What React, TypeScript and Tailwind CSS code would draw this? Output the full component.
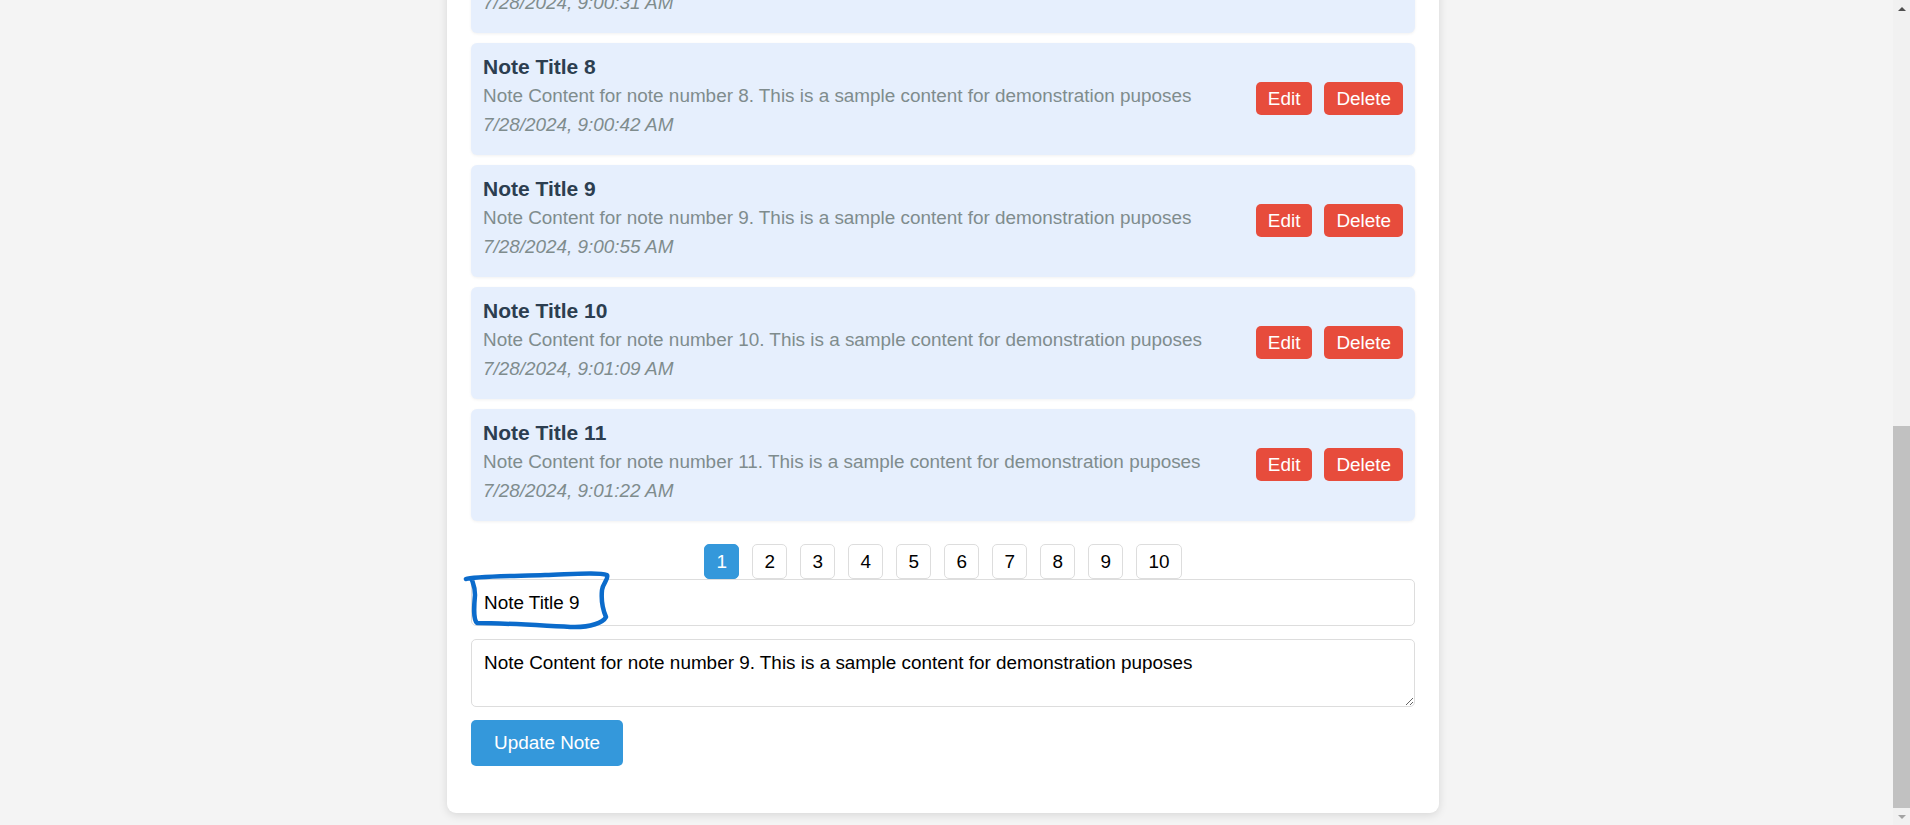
import React, { useState } from 'react';

type Note = {
  id: number;
  title: string;
  content: string;
  createdAt: string;
};

const times = [
  '8:59:05', '8:59:18', '8:59:34', '8:59:47', '9:00:02', '9:00:17',
  '9:00:31', '9:00:42', '9:00:55', '9:01:09', '9:01:22'
];

const initialNotes: Note[] = times.map((t, i) => ({
  id: i + 1,
  title: `Note Title ${i + 1}`,
  content: `Note Content for note number ${i + 1}. This is a sample content for demonstration puposes`,
  createdAt: `7/28/2024, ${t} AM`
}));

export default function App() {
  const [notes] = useState<Note[]>(initialNotes);
  const [page, setPage] = useState(1);
  const [title, setTitle] = useState('Note Title 9');
  const [content, setContent] = useState(
    'Note Content for note number 9. This is a sample content for demonstration puposes'
  );

  return (
    <div className="flex h-[825px] w-full overflow-hidden bg-[#f4f4f4] font-['Liberation_Sans',Arial,sans-serif] text-[18.9px]">
      <div className="flex flex-1 flex-col justify-end overflow-hidden pb-[12px]">
        <div className="flex shrink-0 justify-center pr-[7px]">
          <div className="w-[992px] shrink-0 rounded-[9px] bg-white px-[24px] pt-[24px] pb-[47px] shadow-[0_2px_10px_rgba(0,0,0,0.12)]">
            <h1 className="mb-[24px] text-center text-[28px] font-bold text-[#2c3e50]">Notes App</h1>

            <div className="flex flex-col gap-[10px]">
              {notes.map((note) => (
                <div
                  key={note.id}
                  className="flex items-center justify-between rounded-[6px] bg-[#e6effd] p-[12px] shadow-[0_1px_3px_rgba(0,0,0,0.06)]"
                >
                  <div className="pb-[7px]">
                    <h3 className="text-[21px] leading-[23px] font-bold text-[#2c3e50]">{note.title}</h3>
                    <p className="mt-[7px] leading-[22px] text-[#7f8c8d]">{note.content}</p>
                    <p className="mt-[7px] leading-[22px] text-[#7f8c8d] italic">{note.createdAt}</p>
                  </div>
                  <div className="flex gap-[12px]">
                    <button className="rounded-[5px] bg-[#e74c3c] px-[12px] py-[6px] leading-[21px] text-white">
                      Edit
                    </button>
                    <button className="rounded-[5px] bg-[#e74c3c] px-[12px] py-[6px] leading-[21px] text-white">
                      Delete
                    </button>
                  </div>
                </div>
              ))}
            </div>

            <div className="mt-[23.5px] flex justify-center gap-[13px]">
              {[1, 2, 3, 4, 5, 6, 7, 8, 9, 10].map((n) => (
                <button
                  key={n}
                  onClick={() => setPage(n)}
                  className={`h-[35px] rounded-[5px] border px-[11.25px] leading-[21px] ${
                    page === n
                      ? 'border-[#3498db] bg-[#3498db] text-white'
                      : 'border-[#dddddd] bg-white text-black'
                  }`}
                >
                  {n}
                </button>
              ))}
            </div>

            <form onSubmit={(e) => e.preventDefault()}>
              <div className="relative">
                <input
                  type="text"
                  value={title}
                  onChange={(e) => setTitle(e.target.value)}
                  className="block h-[47px] w-full rounded-[5px] border border-[#dddddd] px-[12px] text-black outline-none"
                />
                {/* hand-drawn highlight around the title */}
                <svg
                  className="pointer-events-none absolute left-[-6px] top-[-8px] h-[64px] w-[150px] overflow-visible"
                  viewBox="0 0 150 64"
                  fill="none"
                >
                  <path
                    d="M1 8 C 8 5, 50 5, 80 4 C 110 3, 134 1, 142 4 C 144 8, 138 12, 137 19 C 136 29, 138 39, 141 46 C 138 52, 125 56, 110 56 C 85 55, 40 52, 12 52 C 8 48, 9 35, 10 24 C 10 16, 8 12, 7 9"
                    stroke="#0b6bcb"
                    strokeWidth="4.5"
                    strokeLinecap="round"
                    strokeLinejoin="round"
                  />
                </svg>
              </div>
              <textarea
                value={content}
                onChange={(e) => setContent(e.target.value)}
                className="mt-[13px] block h-[68px] w-full rounded-[5px] border border-[#dddddd] px-[12px] pt-[9px] pb-[12px] leading-normal text-black outline-none"
              />
              <button
                type="submit"
                className="mt-[13px] h-[46px] rounded-[5px] bg-[#3498db] px-[23px] text-white"
              >
                Update Note
              </button>
            </form>
          </div>
        </div>
      </div>

      {/* window scrollbar, scrolled to the bottom */}
      <div className="flex w-[17px] shrink-0 flex-col bg-[#f1f1f1]">
        <div className="flex h-[17px] items-center justify-center">
          <div className="h-0 w-0 border-x-[4px] border-b-[4px] border-x-transparent border-b-[#505050]" />
        </div>
        <div className="flex flex-1 flex-col justify-end">
          <div className="h-[382px] bg-[#c1c1c1]" />
        </div>
        <div className="flex h-[17px] items-center justify-center">
          <div className="h-0 w-0 border-x-[4px] border-t-[4px] border-x-transparent border-t-[#a3a3a3]" />
        </div>
      </div>
    </div>
  );
}
